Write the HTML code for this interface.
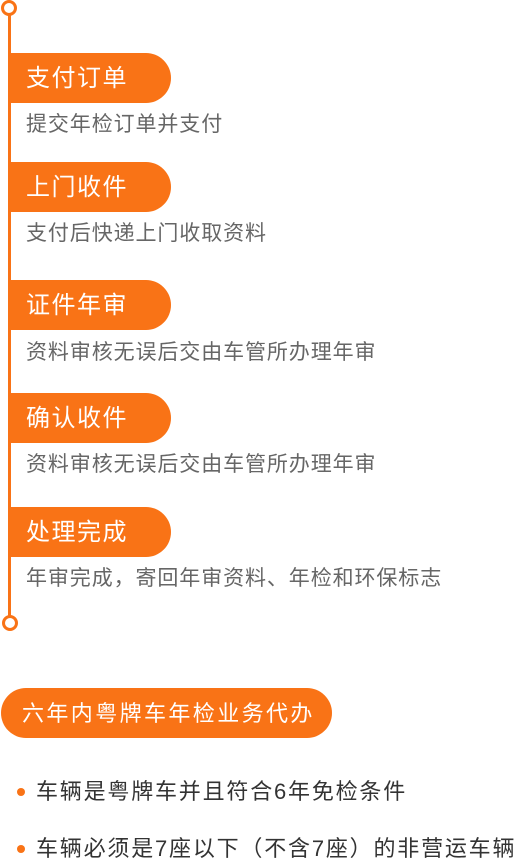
<!DOCTYPE html>
<html><head><meta charset="utf-8"><style>
*{margin:0;padding:0;box-sizing:border-box}
body{width:516px;height:862px;background:#fff;position:relative;overflow:hidden;font-family:"Liberation Sans","Noto Sans CJK SC",sans-serif}
.line{position:absolute;left:8px;top:14px;width:3px;height:602px;background:#f97316}
.circ{position:absolute;width:16px;height:16px;border:3px solid #f97316;border-radius:50%;background:#fff}
.pill{position:absolute;left:9px;width:162px;height:50px;background:#f97316;border-radius:0 25px 25px 0;color:#fff;font-size:24px;letter-spacing:1.5px;line-height:52px;padding-left:17px}
.sub{position:absolute;left:26px;font-size:21px;letter-spacing:0.9px;color:#666;line-height:24px;white-space:nowrap}
.big{position:absolute;left:1px;top:688px;width:331px;height:50px;background:#f97316;border-radius:25px;color:#fff;font-size:22px;letter-spacing:2.4px;line-height:51px;padding-left:21px}
.li{position:absolute;left:36px;font-size:22px;letter-spacing:1.8px;color:#333;line-height:26px;white-space:nowrap}
.dot{position:absolute;left:17px;width:8px;height:8px;border-radius:50%;background:#f97316}
</style></head><body>
<div class="line"></div>
<div class="circ" style="left:1px;top:0px"></div>
<div class="circ" style="left:2px;top:615px"></div>
<div class="pill" style="top:53px">支付订单</div>
<div class="sub" style="top:113px">提交年检订单并支付</div>
<div class="pill" style="top:162px">上门收件</div>
<div class="sub" style="top:222px">支付后快递上门收取资料</div>
<div class="pill" style="top:280px">证件年审</div>
<div class="sub" style="top:341px">资料审核无误后交由车管所办理年审</div>
<div class="pill" style="top:393px">确认收件</div>
<div class="sub" style="top:453px">资料审核无误后交由车管所办理年审</div>
<div class="pill" style="top:507px">处理完成</div>
<div class="sub" style="top:567px">年审完成，寄回年审资料、年检和环保标志</div>
<div class="big">六年内粤牌车年检业务代办</div>
<div class="dot" style="top:788px"></div>
<div class="li" style="top:779px">车辆是粤牌车并且符合6年免检条件</div>
<div class="dot" style="top:845px"></div>
<div class="li" style="top:836px">车辆必须是7座以下（不含7座）的非营运车辆</div>
</body></html>
